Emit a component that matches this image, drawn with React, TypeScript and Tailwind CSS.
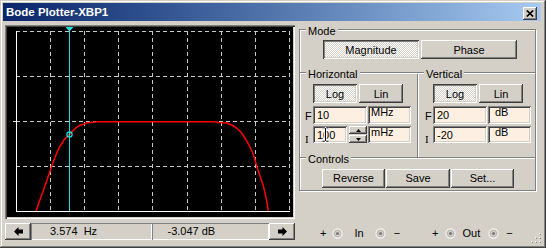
import React from "react";

const RAISED =
  "bg-[#d4d0c8] shadow-[inset_-1px_-1px_#404040,inset_1px_1px_#ffffff,inset_-2px_-2px_#808080,inset_2px_2px_#d4d0c8]";
const PRESSED =
  "bg-[#e6e3de] bg-[image:repeating-conic-gradient(#ffffff_0_25%,#d4d0c8_0_50%)] bg-size-[2px_2px] shadow-[inset_1px_1px_#404040,inset_-1px_-1px_#ffffff,inset_2px_2px_#808080,inset_-2px_-2px_#d4d0c8]";
const SUNKEN =
  "bg-[#fdf0e3] shadow-[inset_1px_1px_#808080,inset_-1px_-1px_#ffffff,inset_2px_2px_#404040,inset_-2px_-2px_#d4d0c8]";

function Btn({
  w,
  pressed,
  children,
  extra = "",
}: {
  w: string;
  pressed?: boolean;
  children: React.ReactNode;
  extra?: string;
}) {
  return (
    <div className={`${w} flex h-[19px] items-center justify-center ${pressed ? PRESSED : RAISED} ${extra}`}>
      {children}
    </div>
  );
}

function GroupLabel({ pos, children }: { pos: string; children: React.ReactNode }) {
  return <span className={`absolute ${pos} bg-[#d4d0c8] px-[2px] leading-[13px]`}>{children}</span>;
}

function Arrow({ dir }: { dir: "left" | "right" }) {
  return (
    <div className={`flex w-[26px] items-center justify-center ${RAISED}`}>
      <svg width="9" height="9" viewBox="0 0 9 9" className={dir === "right" ? "-scale-x-100" : ""}>
        <polygon points="0,4.5 4.5,0 4.5,2.5 9,2.5 9,6.5 4.5,6.5 4.5,9" fill="#000" />
      </svg>
    </div>
  );
}

function Term({ ml }: { ml: string }) {
  return (
    <svg width="11" height="11" viewBox="0 0 11 11" className={`${ml} block`}>
      <circle cx="5.5" cy="5.5" r="4.6" fill="#d4d0c8" stroke="#f6f6f6" strokeWidth="1.1" />
      <circle cx="5.5" cy="5.5" r="3.3" fill="none" stroke="#b4b0a8" strokeWidth="0.9" />
      <circle cx="5.5" cy="5.5" r="1.6" fill="#7a7a7a" />
    </svg>
  );
}

function Plot() {
  const vx = [43, 77, 111, 145, 180, 214, 248, 282];
  const hy = [4, 49, 94, 139];
  const pts: [number, number][] = [
    [29, 184], [32.5, 174], [36.3, 163.7], [40.5, 151.5], [44.7, 139.3], [48.5, 129],
    [52.3, 120.3], [57, 113], [62, 107.7], [66, 103.5], [69.7, 100.3], [73, 98.3],
    [77, 97], [80, 95.8], [84, 95.4], [90, 94.7], [209.7, 94.7], [210.5, 95.6],
    [219, 95.8], [223, 97.3], [226.5, 99], [230, 101.3], [233, 104.3], [236, 108],
    [238.5, 112], [241, 116.3], [243, 120], [244.7, 123.7], [246.5, 128], [248, 133],
    [249.7, 139.3], [253, 149], [256.3, 158.7], [259, 170], [261.3, 184],
  ];
  return (
    <svg width="286" height="190" viewBox="0 0 286 190" className="block">
      {vx.map((x) => (
        <line key={"v" + x} x1={x + 0.5} y1={4} x2={x + 0.5} y2={184} stroke="#c8c8c8" strokeDasharray="4 3" shapeRendering="crispEdges" />
      ))}
      {hy.map((y) => (
        <line key={"h" + y} x1={9} y1={y + 0.5} x2={283} y2={y + 0.5} stroke="#c8c8c8" strokeDasharray="4 3" shapeRendering="crispEdges" />
      ))}
      <line x1={6} y1={94.5} x2={9} y2={94.5} stroke="#e0e0e0" shapeRendering="crispEdges" />
      <line x1={9.5} y1={4} x2={9.5} y2={185} stroke="#ffffff" shapeRendering="crispEdges" />
      <line x1={9} y1={184.5} x2={283} y2={184.5} stroke="#ffffff" shapeRendering="crispEdges" />
      <polyline points={pts.map((p) => p.join(",")).join(" ")} fill="none" stroke="#ff0000" strokeWidth={1.5} />
      <line x1={62.5} y1={0} x2={62.5} y2={184} stroke="#22dede" shapeRendering="crispEdges" />
      <polygon points="58.5,0 66.5,0 62.5,4.5" fill="#22dede" />
      <circle cx={62.5} cy={107.5} r={2.6} fill="none" stroke="#22dede" strokeWidth={1.2} />
    </svg>
  );
}

function Field({ w, children, extra = "" }: { w: string; children: React.ReactNode; extra?: string }) {
  return <div className={`${w} ${SUNKEN} pl-[4px] pt-[3px] leading-[13px] ${extra}`}>{children}</div>;
}

function Unit({ pl, children }: { pl: string; children: React.ReactNode }) {
  return <div className={`ml-[1px] w-[43px] ${SUNKEN} ${pl} pt-[0px] leading-[13px]`}>{children}</div>;
}

function FLabel({ ml }: { ml: string }) {
  return <span className={`${ml} w-[8px] pt-[4px] leading-[13px]`}>F</span>;
}

function ILabel({ ml }: { ml: string }) {
  return <span className={`${ml} w-[8px] pt-[8px] font-['Liberation_Serif',serif] text-[11px] leading-[10px]`}>I</span>;
}

function Spinner() {
  return (
    <div className="ml-[2px] flex w-[18px] flex-col">
      <div className={`flex h-[8px] items-center justify-center ${RAISED}`}>
        <svg width="5" height="3" viewBox="0 0 5 3"><polygon points="2.5,0 5,3 0,3" fill="#000" /></svg>
      </div>
      <div className={`mt-[1px] flex h-[8px] items-center justify-center ${RAISED}`}>
        <svg width="5" height="3" viewBox="0 0 5 3"><polygon points="0,0 5,0 2.5,3" fill="#000" /></svg>
      </div>
    </div>
  );
}

export default function App() {
  return (
    <div className="relative h-[248px] w-[546px] overflow-hidden bg-[#d4d0c8] p-[3px] font-['Liberation_Sans',Arial,sans-serif] text-[11px] leading-[13px] text-black shadow-[inset_-1px_-1px_#404040,inset_1px_1px_#d4d0c8,inset_-2px_-2px_#808080,inset_2px_2px_#ffffff]">
      {/* Title bar */}
      <div className="flex h-[18px] w-[538px] items-start justify-between bg-linear-to-r from-[#0a246a] to-[#a6caf0] pl-[3px] pr-[4px] pt-[3px]">
        <span className="text-[11.5px] font-bold leading-[13px] text-white">Bode Plotter-XBP1</span>
        <div className={`mt-[1px] flex h-[13px] w-[14px] items-center justify-center ${RAISED}`}>
          <svg width="8" height="7" viewBox="0 0 8 7">
            <path d="M0.8 0.5 L7.2 6.5 M7.2 0.5 L0.8 6.5" stroke="#000" strokeWidth="1.7" />
          </svg>
        </div>
      </div>

      <div className="flex">
        {/* Left column */}
        <div className="ml-[2px] w-[290px]">
          <div className="mt-[4px] h-[194px] p-[2px] shadow-[inset_1px_1px_#808080,inset_2px_2px_#404040,inset_-1px_-1px_#ffffff,inset_-2px_-2px_#d4d0c8]">
            <div className="h-[190px] w-[286px] bg-black">
              <Plot />
            </div>
          </div>
          <div className="mt-[4px] flex h-[17px]">
            <Arrow dir="left" />
            <div className="flex flex-1 items-center whitespace-pre pl-[19px] shadow-[inset_1px_1px_#808080,inset_-1px_-1px_#ffffff]">
              3.574  Hz
            </div>
            <div className="flex flex-1 items-center whitespace-pre pl-[16px] shadow-[inset_1px_1px_#808080,inset_-1px_-1px_#ffffff]">
              -3.047 dB
            </div>
            <Arrow dir="right" />
          </div>
        </div>

        {/* Right column */}
        <div className="ml-[4px] w-[238px]">
          <div className="relative mt-[8px] flex h-[162px] w-[237px] flex-col border border-[#808080] shadow-[1px_1px_0_#ffffff,inset_1px_1px_0_#ffffff]">
            <GroupLabel pos="left-[6px] top-[-5px]">Mode</GroupLabel>
            <div className="flex h-[42px] gap-[2px] pl-[23px] pt-[10px]">
              <Btn w="w-[96px]" pressed extra="pt-[1px]">Magnitude</Btn>
              <Btn w="w-[96px]" extra="pt-[1px]">Phase</Btn>
            </div>
            <div className="h-[2px] border-t border-[#808080] bg-white" />
            <div className="flex h-[83px]">
              {/* Horizontal */}
              <div className="relative w-[117px]">
                <GroupLabel pos="left-[6px] top-[-6px]">Horizontal</GroupLabel>
                <div className="flex gap-[2px] pl-[13px] pt-[10px]">
                  <Btn w="w-[44px]" pressed extra="pt-[1px]">Log</Btn>
                  <Btn w="w-[44px]" extra="pt-[1px]">Lin</Btn>
                </div>
                <div className="mt-[3px] flex h-[18px]">
                  <FLabel ml="ml-[5px]" />
                  <Field w="w-[54px]">10</Field>
                  <Unit pl="pl-[3px]">MHz</Unit>
                </div>
                <div className="mt-[2px] flex h-[17px]">
                  <ILabel ml="ml-[5px]" />
                  <Field w="w-[34px]" extra="relative">
                    100
                    <svg width="7" height="15" viewBox="0 0 7 15" className="absolute left-[9px] top-[1px]">
                      <path d="M0.5 0.8 H2.7 L3.5 1.6 L4.3 0.8 H6.5 M3.5 1.6 V13.4 M0.5 14.2 H2.7 L3.5 13.4 L4.3 14.2 H6.5" stroke="#ffffff" strokeWidth="2.6" fill="none" />
                      <path d="M0.5 0.8 H2.7 L3.5 1.6 L4.3 0.8 H6.5 M3.5 1.6 V13.4 M0.5 14.2 H2.7 L3.5 13.4 L4.3 14.2 H6.5" stroke="#000000" strokeWidth="1" fill="none" />
                    </svg>
                  </Field>
                  <Spinner />
                  <Unit pl="pl-[3px]">mHz</Unit>
                </div>
              </div>
              <div className="w-[2px] border-l border-[#808080] bg-white" />
              {/* Vertical */}
              <div className="relative flex-1">
                <GroupLabel pos="left-[5px] top-[-6px]">Vertical</GroupLabel>
                <div className="flex gap-[2px] pl-[14px] pt-[10px]">
                  <Btn w="w-[44px]" pressed extra="pt-[1px]">Log</Btn>
                  <Btn w="w-[44px]" extra="pt-[1px]">Lin</Btn>
                </div>
                <div className="mt-[3px] flex h-[18px]">
                  <FLabel ml="ml-[6px]" />
                  <Field w="w-[54px]">20</Field>
                  <Unit pl="pl-[7px]">dB</Unit>
                </div>
                <div className="mt-[2px] flex h-[17px]">
                  <ILabel ml="ml-[6px]" />
                  <Field w="w-[54px]">-20</Field>
                  <Unit pl="pl-[7px]">dB</Unit>
                </div>
              </div>
            </div>
            <div className="h-[2px] border-t border-[#808080] bg-white" />
            <div className="relative flex-1">
              <GroupLabel pos="left-[6px] top-[-6px]">Controls</GroupLabel>
              <div className="flex gap-[1px] pl-[22px] pt-[10px]">
                <Btn w="w-[63px]">Reverse</Btn>
                <Btn w="w-[64px]">Save</Btn>
                <Btn w="w-[63px]">Set...</Btn>
              </div>
            </div>
          </div>

          {/* Terminals */}
          <div className="mt-[35px] flex h-[14px] items-center">
            <span className="ml-[21px]">+</span>
            <Term ml="ml-[6px]" />
            <span className="ml-[11px]">In</span>
            <Term ml="ml-[11px]" />
            <span className="ml-[8px]">−</span>
            <span className="ml-[32px]">+</span>
            <Term ml="ml-[6px]" />
            <span className="ml-[7px]">Out</span>
            <Term ml="ml-[8px]" />
            <span className="ml-[7px]">−</span>
          </div>
        </div>
      </div>

      {/* Resize grip */}
      <svg width="12" height="12" viewBox="0 0 12 12" className="absolute bottom-[4px] right-[4px]">
        {[
          [9, 1],
          [5, 5],
          [9, 5],
          [1, 9],
          [5, 9],
          [9, 9],
        ].map(([x, y]) => (
          <g key={`${x}-${y}`}>
            <rect x={x} y={y} width="1" height="1" fill="#ffffff" />
            <rect x={x + 1} y={y + 1} width="1" height="1" fill="#808080" />
          </g>
        ))}
      </svg>
    </div>
  );
}
